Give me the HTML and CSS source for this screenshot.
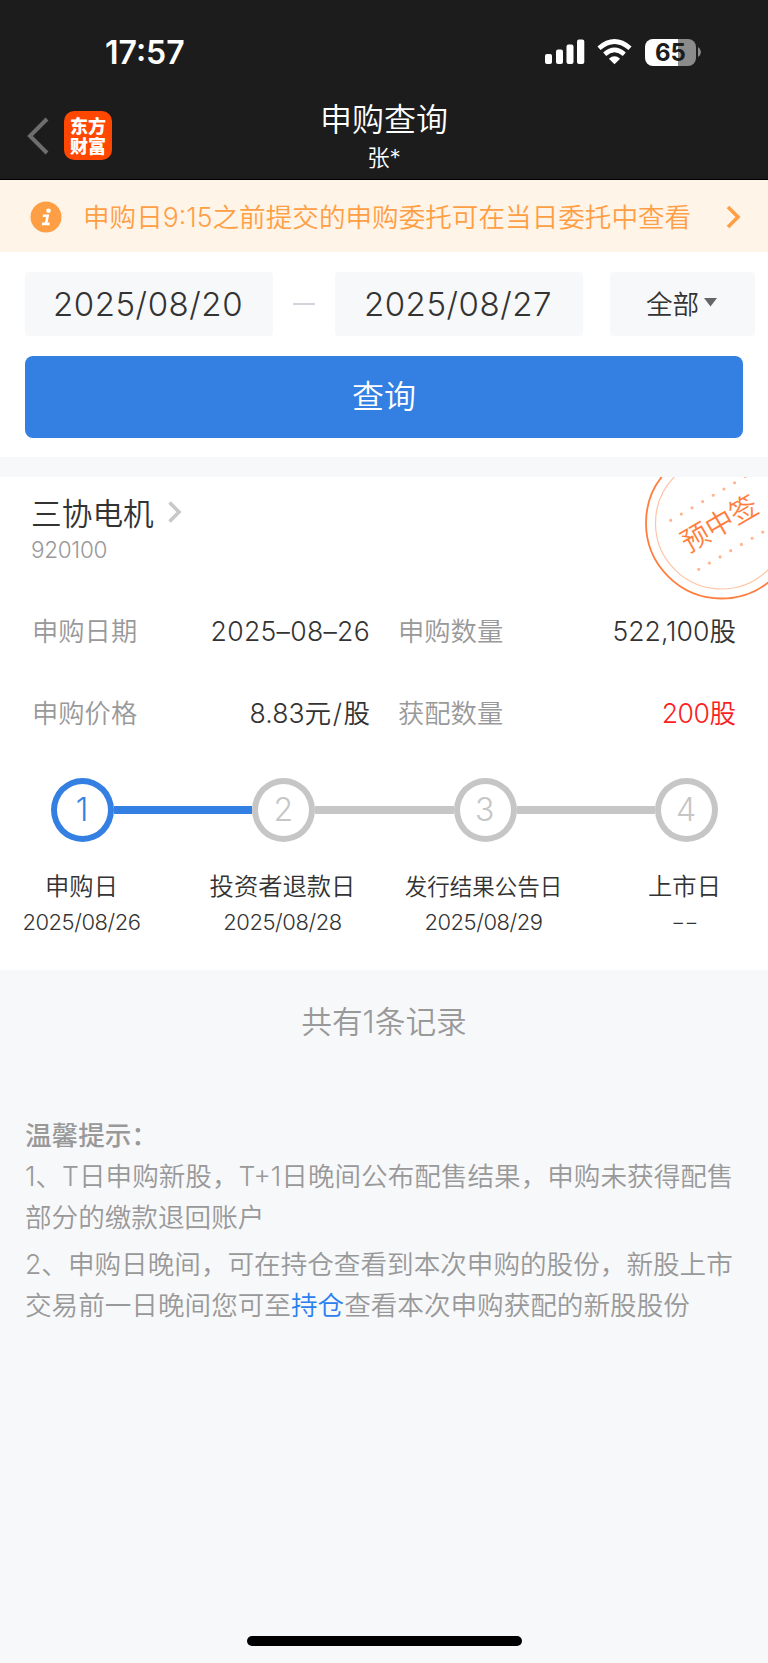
FILE: index.html
```html
<!DOCTYPE html>
<html lang="zh-CN">
<head>
<meta charset="utf-8">
<title>申购查询</title>
<link rel="stylesheet" href="styles.css">
</head>
<body>
<div class="screen">
  <header class="top">
    <div class="status">
      <span class="time">17:57</span>
      <svg class="signal" width="40" height="26" viewBox="0 0 40 26" fill="#fff">
        <rect x="0" y="15" width="7" height="10" rx="2"/><rect x="11" y="10.500" width="7" height="14.500" rx="2"/><rect x="21.500" y="5.500" width="7" height="19.500" rx="2"/><rect x="32" y="0.500" width="7.300" height="24.500" rx="2"/>
      </svg>
      <svg class="wifi" width="36" height="26" viewBox="0 0 36 26" fill="none" stroke="#fff">
        <path d="M2 9.200Q17.500-4.200 33 9.200" stroke-width="4.800"/>
        <path d="M7.700 15.200Q17.500 6.600 27.300 15.200" stroke-width="4.600"/>
        <path d="M17.500 25.200L11.900 19.700Q17.500 15 23.100 19.700Z" fill="#fff" stroke="none"/>
      </svg>
      <div class="battery"><span class="battery-level">65</span><svg width="3" height="10" viewBox="0 0 4 10" preserveAspectRatio="none"><path d="M0 0Q4 2 4 5T0 10Z" fill="#8b8b8b"/></svg></div>
    </div>
    <div class="nav">
      <svg class="back" width="22" height="38" viewBox="0 0 22 38" fill="none" stroke="#6d6d6d" stroke-width="4"><path d="M20 2L3 19L20 36"/></svg>
      <div class="logo">东方<br>财富</div>
      <div class="heading"><h1>申购查询</h1><p>张<span class="num">*</span></p></div>
    </div>
  </header>

  <div class="notice">
    <svg width="32" height="32" viewBox="0 0 32 32"><circle cx="16" cy="16" r="15.500" fill="#ff9f45"/><circle cx="18.500" cy="9.800" r="2.300" fill="#fff"/><path d="M12.800 14.800H17.600L15.900 22.900M12 22.900H19.600" fill="none" stroke="#fff" stroke-width="2.600"/></svg>
    <p>申购日<span class="num">9:15</span>之前提交的申购委托可在当日委托中查看</p>
    <svg class="notice-arrow" width="15" height="24" viewBox="0 0 15 24" fill="none" stroke="#ff9f45" stroke-width="3.600"><path d="M2 2L12 12L2 22"/></svg>
  </div>

  <section class="form">
    <div class="filters">
      <div class="date">2025/08/20</div>
      <i class="dash"></i>
      <div class="date">2025/08/27</div>
      <div class="select">全部<svg width="13" height="9" viewBox="0 0 13 9"><path d="M0 0H13L6.500 8.500Z" fill="#666"/></svg></div>
    </div>
    <button class="query">查询</button>
  </section>

  <section class="card">
    <svg class="stamp" width="123" height="124" viewBox="0 0 123 124" fill="none">
      <circle cx="76.500" cy="46" r="75.500" stroke="#ff7e3e" stroke-width="1.800"/>
      <circle cx="76.500" cy="46" r="66" stroke="#ffc4a6" stroke-width="1.200"/>
      <path d="M25.700 43.300L113-8M53.700 92.300L123 52" stroke="#ffb48f" stroke-width="3.200" stroke-linecap="round" stroke-dasharray="0 12.350"/>
      <text class="stamp-text" transform="translate(74.500 46.500) rotate(-30)" text-anchor="middle" y="10">预中签</text>
    </svg>
    <div class="stock">
      <h2>三协电机<svg width="14" height="22" viewBox="0 0 14 22" fill="none" stroke="#c8c8c8" stroke-width="3.600"><path d="M1.500 1.500L11 11L1.500 20.500"/></svg></h2>
      <p class="code">920100</p>
    </div>
    <dl class="facts">
      <div><dt>申购日期</dt><dd class="num day">2025–08–26</dd></div>
      <div><dt>申购数量</dt><dd><span class="num">522,100</span>股</dd></div>
      <div><dt>申购价格</dt><dd><span class="num">8.83</span>元<span class="slash">/</span>股</dd></div>
      <div><dt>获配数量</dt><dd class="hit"><span class="num">200</span>股</dd></div>
    </dl>
    <div class="track">
      <span class="dot on">1</span><i class="line on"></i><span class="dot">2</span><i class="line"></i><span class="dot">3</span><i class="line"></i><span class="dot">4</span>
    </div>
    <div class="steps">
      <div><h3>申购日</h3><p>2025/08/26</p></div>
      <div><h3>投资者退款日</h3><p>2025/08/28</p></div>
      <div><h3 class="small">发行结果公告日</h3><p>2025/08/29</p></div>
      <div><h3>上市日</h3><p class="none">--</p></div>
    </div>
  </section>

  <p class="total">共有<span class="num">1</span>条记录</p>

  <section class="tips">
    <h4>温馨提示：</h4>
    <p><span class="num">1</span>、<span class="num">T</span>日申购新股，<span class="num">T+1</span>日晚间公布配售结果，申购未获得配售<br>部分的缴款退回账户</p>
    <p><span class="num">2</span>、申购日晚间，可在持仓查看到本次申购的股份，新股上市<br>交易前一日晚间您可至<a>持仓</a>查看本次申购获配的新股股份</p>
  </section>
  <div class="home"></div>
</div>
</body>
</html>
```
FILE: styles.css
```css
* { box-sizing: border-box; }
body, h1, h2, h3, h4, p, dl, dd { margin: 0; font-weight: inherit; }
body {
  width: 768px;
  background: #f7f8fa;
  color: #333;
  font-family: "Noto Sans CJK SC", sans-serif;
  font-weight: 350;
  font-size: 26.600px;
}
svg { display: block; flex: none; }
.num, .slash { font-family: Inter, sans-serif; font-weight: 350; line-height: 0; }
.slash { margin: 0 1.500px; }
.screen { height: 1663px; display: flex; flex-direction: column; overflow: hidden; }

.top { height: 180px; background: #1c1c1c; color: #fff; border-bottom: 1px solid #000; flex: none; }
.status { height: 104px; display: flex; align-items: center; padding: 0 9px 0 105px; }
.time { font: 600 32px/40px Inter, sans-serif; margin: 2px auto 0 0; }
.wifi { margin: 0 12px 0 12px; }
.battery { display: flex; align-items: center; gap: 2px; width: 114px; }
.battery-level {
  width: 51px; height: 27px; border-radius: 8px; text-align: center;
  background: linear-gradient(90deg, #fff 65%, #8b8b8b 65%);
  color: #1c1c1c; font: 700 24px/27px Inter, sans-serif;
}
.nav { display: grid; grid-template-columns: 27px 22px 15px 48px 1fr; height: 75px; }
.back { grid-column: 2; margin-top: 13px; }
.logo {
  grid-column: 4; width: 48px; height: 49px; margin-top: 7px; padding-top: 4px; border-radius: 10px;
  background: #ff4700; text-align: center;
  font-weight: 900; font-size: 18px; line-height: 20px;
}
.heading { margin: -9px 112px 0 0; text-align: center; }
.heading h1 { font-size: 32px; line-height: 44px; }
.heading p { font-size: 22.400px; line-height: 34px; }

.notice { height: 72px; flex: none; background: #fff4e8; color: #ff9f45; display: flex; align-items: center; padding: 2px 27px 0 30px; }
.notice p { margin: -2px 0 0 21px; line-height: 40px; white-space: nowrap; }
.notice-arrow { margin-left: auto; }

.form { height: 205px; flex: none; background: #fff; padding: 20px 25px 0; }
.filters { display: flex; align-items: center; width: 730px; height: 64px; }
.date { width: 248px; height: 64px; padding-right: 2px; border-radius: 4px; background: #f7f8fa; text-align: center; font: 350 33px/64px Inter, sans-serif; letter-spacing: 0.550px; }
.dash { width: 22px; height: 2px; margin: 0 20px; background: #d0d5dc; }
.select { width: 145px; height: 64px; margin-left: 27px; padding: 0 2px 3px 0; border-radius: 4px; background: #f7f8fa; display: flex; align-items: center; justify-content: center; gap: 5px; }
.query { display: block; width: 718px; height: 82px; margin-top: 20px; padding: 0 0 6px; border: 0; border-radius: 8px; background: #3380e2; color: #fff; font: inherit; font-size: 32px; line-height: 76px; }

.card { position: relative; height: 493px; margin-top: 20px; flex: none; background: #fff; overflow: hidden; }
.stamp { position: absolute; top: 0; right: 0; }
.stamp-text { fill: #ff7e3e; font-size: 28px; }
.stock { height: 113px; padding: 14px 31px 0; }
.stock h2 { display: flex; align-items: center; gap: 14px; font-size: 30.700px; line-height: 42px; }
.code { margin-top: 1px; font: 350 22.500px/32px Inter, sans-serif; letter-spacing: -0.300px; color: #999; }
.facts { display: grid; grid-template-columns: 338px 338px; column-gap: 28px; padding: 0 32px; }
.facts div { height: 82px; display: flex; justify-content: space-between; align-items: center; line-height: 40px; }
.facts dt { color: #999; font-size: 26.300px; }
.facts dt, .facts dd:not(.day) { margin-top: -2px; }
.facts .hit { color: #fa1e1e; }
.facts .hit .num { letter-spacing: -0.500px; }
.facts .day { letter-spacing: 0.300px; }
.track { display: flex; align-items: center; margin: 24px 50px 0 51px; }
.dot { width: 63px; height: 64px; border: 6px solid #c6c6c6; border-radius: 50%; color: #c6c6c6; font: 300 32px/52px Inter, sans-serif; text-align: center; text-indent: -1px; flex: none; }
.line { flex: 1; height: 8px; background: #c6c6c6; }
.dot.on { border-color: #3380e2; color: #3380e2; }
.line.on { background: #3380e2; }
.steps { display: grid; grid-template-columns: repeat(4, 201px); margin: 25px -18px 0 -19px; text-align: center; }
.steps h3 { font-size: 24.300px; line-height: 36px; }
.steps .small { font-size: 22.500px; line-height: 36px; }
.steps p { margin-top: 1px; font: 350 22px/36px Inter, sans-serif; letter-spacing: -0.450px; }
.steps .none { transform: scaleX(1.400); }

.total { margin-top: 29px; text-align: center; color: #999; font-size: 30.700px; line-height: 42px; }
.tips { margin-top: 72px; padding: 0 25px; color: #999; line-height: 41px; white-space: nowrap; }
.tips h4 { font-weight: 500; }
.tips p + p { margin-top: 6px; }
.tips a { color: #2b80f0; }
.home { width: 275px; height: 10px; border-radius: 5px; background: #000; margin: auto auto 17px 247px; }
```
